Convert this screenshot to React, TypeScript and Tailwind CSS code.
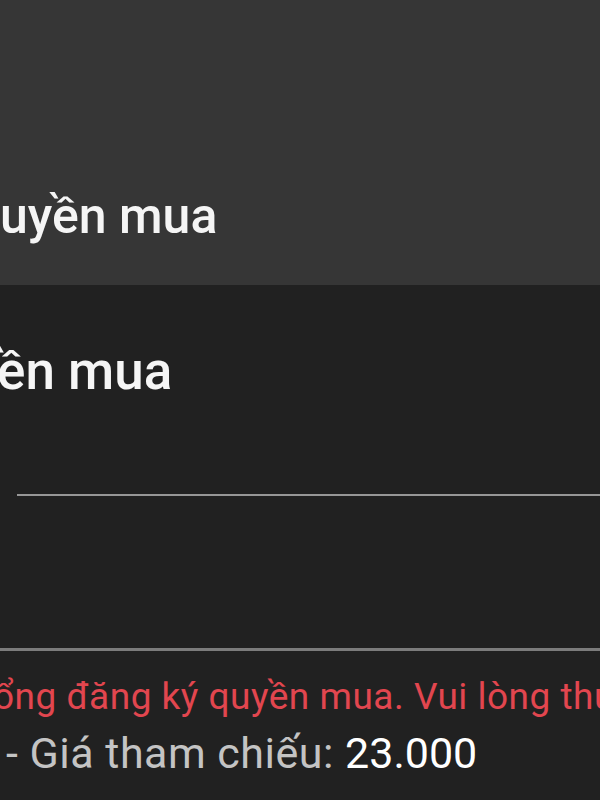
const font = { fontFamily: 'Roboto, "Noto Sans", sans-serif' };

export default function App() {
  return (
    <div className="h-[800px] w-[600px] overflow-hidden bg-[#212121]" style={font}>
      <header className="flex h-[285px] items-end bg-[#363636] pb-[44px]">
        <h1 className="whitespace-nowrap text-[50px] font-medium leading-none text-[#f5f5f5]">uyền mua</h1>
      </header>

      <div className="pt-[60px]">
        <h2 className="-ml-[3px] whitespace-nowrap text-[53px] font-medium leading-none text-[#f5f5f5]">ền mua</h2>
      </div>

      <div className="ml-[17px] mt-[96px] h-[2px] bg-[#979797]" />

      <div className="mt-[152px] h-[3px] bg-[#7c7c7c]" />

      <div className="mt-[27px] -ml-[7px] whitespace-nowrap text-[37px] leading-none tracking-[0.5px] text-[#e2464f]">
        ổng đăng ký quyền mua. Vui lòng thử lại
      </div>
      <div className="mt-[17px] ml-[6px] whitespace-nowrap text-[43px] leading-none">
        <span className="tracking-[0.5px] text-[#c4c4c4]">- Giá tham chiếu: </span>
        <span className="text-white">23.000</span>
      </div>
    </div>
  );
}
